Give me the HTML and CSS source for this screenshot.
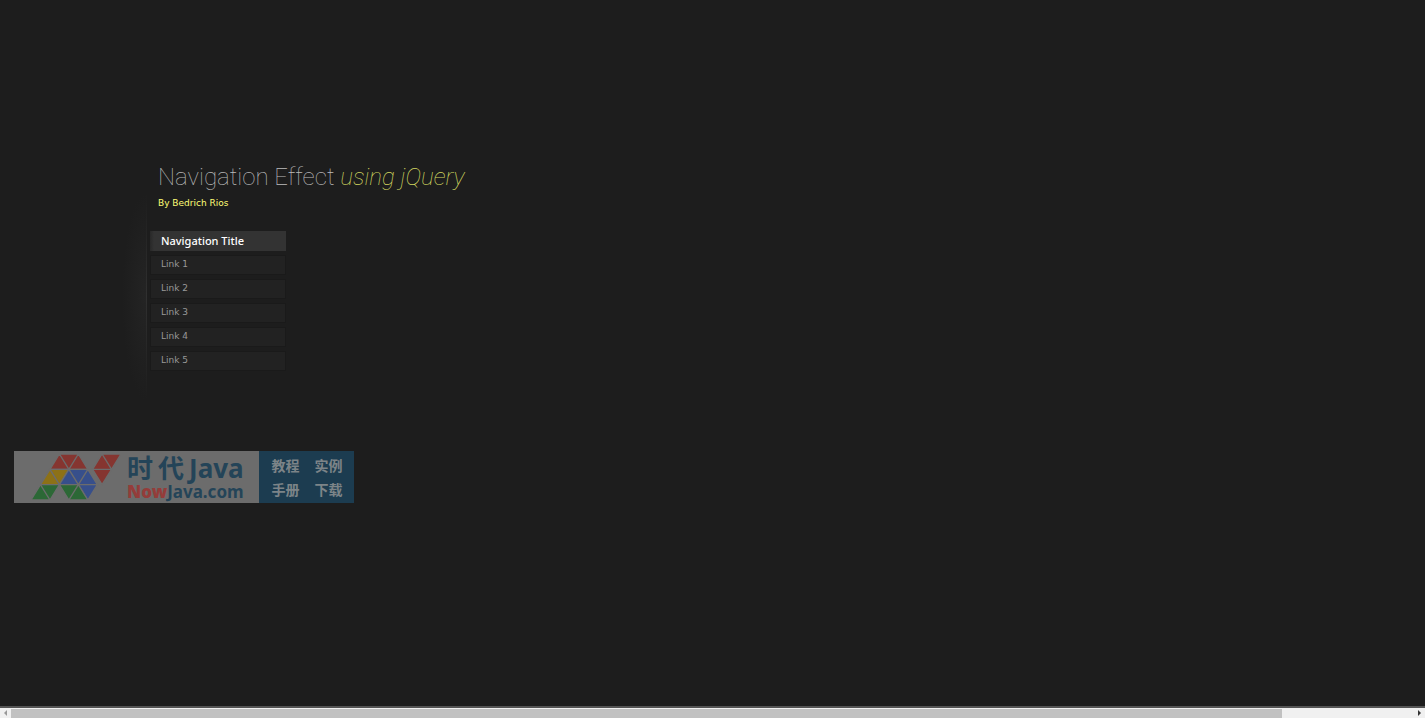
FILE: index.html
```html
<!DOCTYPE html>
<html lang="en">
<head>
    <meta charset="UTF-8">
    <meta name="viewport" content="width=device-width, initial-scale=1.0">
    <title>Navigation Effect using jQuery</title>
    <link rel="stylesheet" href="styles.css">
</head>
<body>
    <main class="content">
        <header class="intro">
            <h1>Navigation Effect <em>using jQuery</em></h1>
            <p><a href="#">By Bedrich Rios</a></p>
        </header>

        <div class="navigation-block">
            <nav>
                <ul id="sliding-navigation">
                    <li><h3>Navigation Title</h3></li>
                    <li><a href="#">Link 1</a></li>
                    <li><a href="#">Link 2</a></li>
                    <li><a href="#">Link 3</a></li>
                    <li><a href="#">Link 4</a></li>
                    <li><a href="#">Link 5</a></li>
                </ul>
            </nav>
        </div>

        <!-- Site banner -->
        <a class="banner" href="#">
            <span class="brand">
                <svg class="logo" width="90" height="46" viewBox="0 0 95 48" preserveAspectRatio="none" aria-hidden="true">
                    <g stroke="#6c6c6c" stroke-width="1.4">
                        <g fill="#853530">
                            <path d="M30 0 20 16H40zM30 0H50L40 16zM50 0 40 16H60z"/>
                            <path d="M75 0 65 16H85zM75 0H95L85 16zM65 16H85L75 32z"/>
                        </g>
                        <path fill="#8d7117" d="M20 16 10 32H30zM20 16H40L30 32z"/>
                        <path fill="#374f8b" d="M40 16 30 32H50zM40 16H60L50 32zM60 16 50 32H70zM50 32H70L60 48z"/>
                        <path fill="#2c6836" d="M10 32 0 48H20zM10 32H30L20 48zM30 32H50L40 48zM50 32 40 48H60z"/>
                    </g>
                </svg>
                <span class="brand-text">
                    <span class="brand-name"><span>时</span><span>代</span><span>Java</span></span>
                    <span class="brand-url"><b>Now</b>Java.com</span>
                </span>
            </span>
            <span class="topics">
                <span>教程</span>
                <span>实例</span>
                <span>手册</span>
                <span>下载</span>
            </span>
        </a>
    </main>

    <!-- Horizontal scroll strip -->
    <div class="scrollbar">
        <button type="button" class="arrow arrow-left" aria-label="Scroll left"></button>
        <div class="track"><div class="thumb"></div></div>
        <button type="button" class="arrow arrow-right" aria-label="Scroll right"></button>
    </div>
</body>
</html>
```

FILE: styles.css
```css
* {
    margin: 0;
    padding: 0;
    box-sizing: border-box;
}
body {
    display: flex;
    flex-direction: column;
    min-height: 100vh;
    background-color: #1d1d1d;
    font-family: "DejaVu Sans", Verdana, sans-serif;
    font-size: 9px;
    color: #888;
}
a {
    color: inherit;
    text-decoration: none;
}
.content {
    flex: 1;
    padding: 160px 14px 0;
}

/* Heading */
.intro {
    padding-left: 144px;
}
.intro h1 {
    font-family: Roboto, "Liberation Sans", sans-serif;
    font-size: 24px;
    font-weight: 100;
    line-height: 35px;
    color: #bbb;
}
.intro h1 em {
    color: #d2d860;
}
.intro p {
    line-height: 16px;
    color: #fffe76;
}

/* Navigation */
.navigation-block {
    width: 272px;
    margin-top: -19px;
    padding: 39px 0 30px 136px;
    background:
        linear-gradient(#1d1d1d, #303030 50%, #1d1d1d) 132px 0 / 1px 100% no-repeat,
        radial-gradient(ellipse at right, #242424, #1d1d1d 70%) 108px 0 / 24px 100% no-repeat;
}
#sliding-navigation {
    list-style: none;
    display: grid;
    gap: 4px;
}
#sliding-navigation h3,
#sliding-navigation a {
    display: block;
    height: 20px;
    line-height: 20px;
}
#sliding-navigation h3 {
    padding-left: 11px;
    font-family: "Noto Sans", sans-serif;
    font-size: 11px;
    font-weight: 500;
    color: #fff;
    background: linear-gradient(90deg, #282828, #333 4px);
}
#sliding-navigation a {
    padding-left: 10px;
    color: #999;
    background-color: #222;
    border: 1px solid #1a1a1a;
    line-height: 17px;
}
#sliding-navigation a:hover {
    background-color: #333;
}

/* Banner */
.banner {
    display: flex;
    width: 340px;
    height: 52px;
    margin-top: 50px;
    font-family: "Noto Sans", "Noto Sans CJK SC", sans-serif;
    font-weight: 700;
}
.brand {
    display: flex;
    align-items: center;
    flex: 1;
    gap: 6px;
    padding-left: 17px;
    background-color: #6c6c6c;
    color: #244458;
}
.brand-text {
    display: flex;
    flex-direction: column;
    padding-top: 2px;
    white-space: nowrap;
}
.brand-name {
    display: flex;
    gap: 5px;
    font-size: 26px;
    line-height: 28px;
}
.brand-url {
    font-size: 17px;
    line-height: 20px;
}
.brand-url b {
    color: #943c3a;
}
.topics {
    display: grid;
    grid-template-columns: 29px 29px;
    gap: 0 14px;
    align-content: center;
    justify-content: center;
    width: 95px;
    padding: 2px 0 0 2px;
    background-color: #1c3c50;
    color: #7c8488;
    font-size: 14px;
    line-height: 24px;
}

/* Scroll strip */
.scrollbar {
    display: flex;
    height: 12px;
    background-color: #f0f0f0;
    border-top: 2px solid #555;
}
.arrow {
    display: flex;
    align-items: center;
    justify-content: center;
    width: 11px;
    border: 0;
    background: none;
}
.arrow::before {
    content: "";
    border: 3px solid transparent;
}
.arrow-left::before {
    border-left-width: 0;
    border-right-color: #999;
}
.arrow-right::before {
    border-right-width: 0;
    border-left-color: #333;
}
.track {
    flex: 1;
    padding-top: 1px;
}
.thumb {
    width: 90.6%;
    height: 100%;
    background-color: #c1c1c1;
}
```
